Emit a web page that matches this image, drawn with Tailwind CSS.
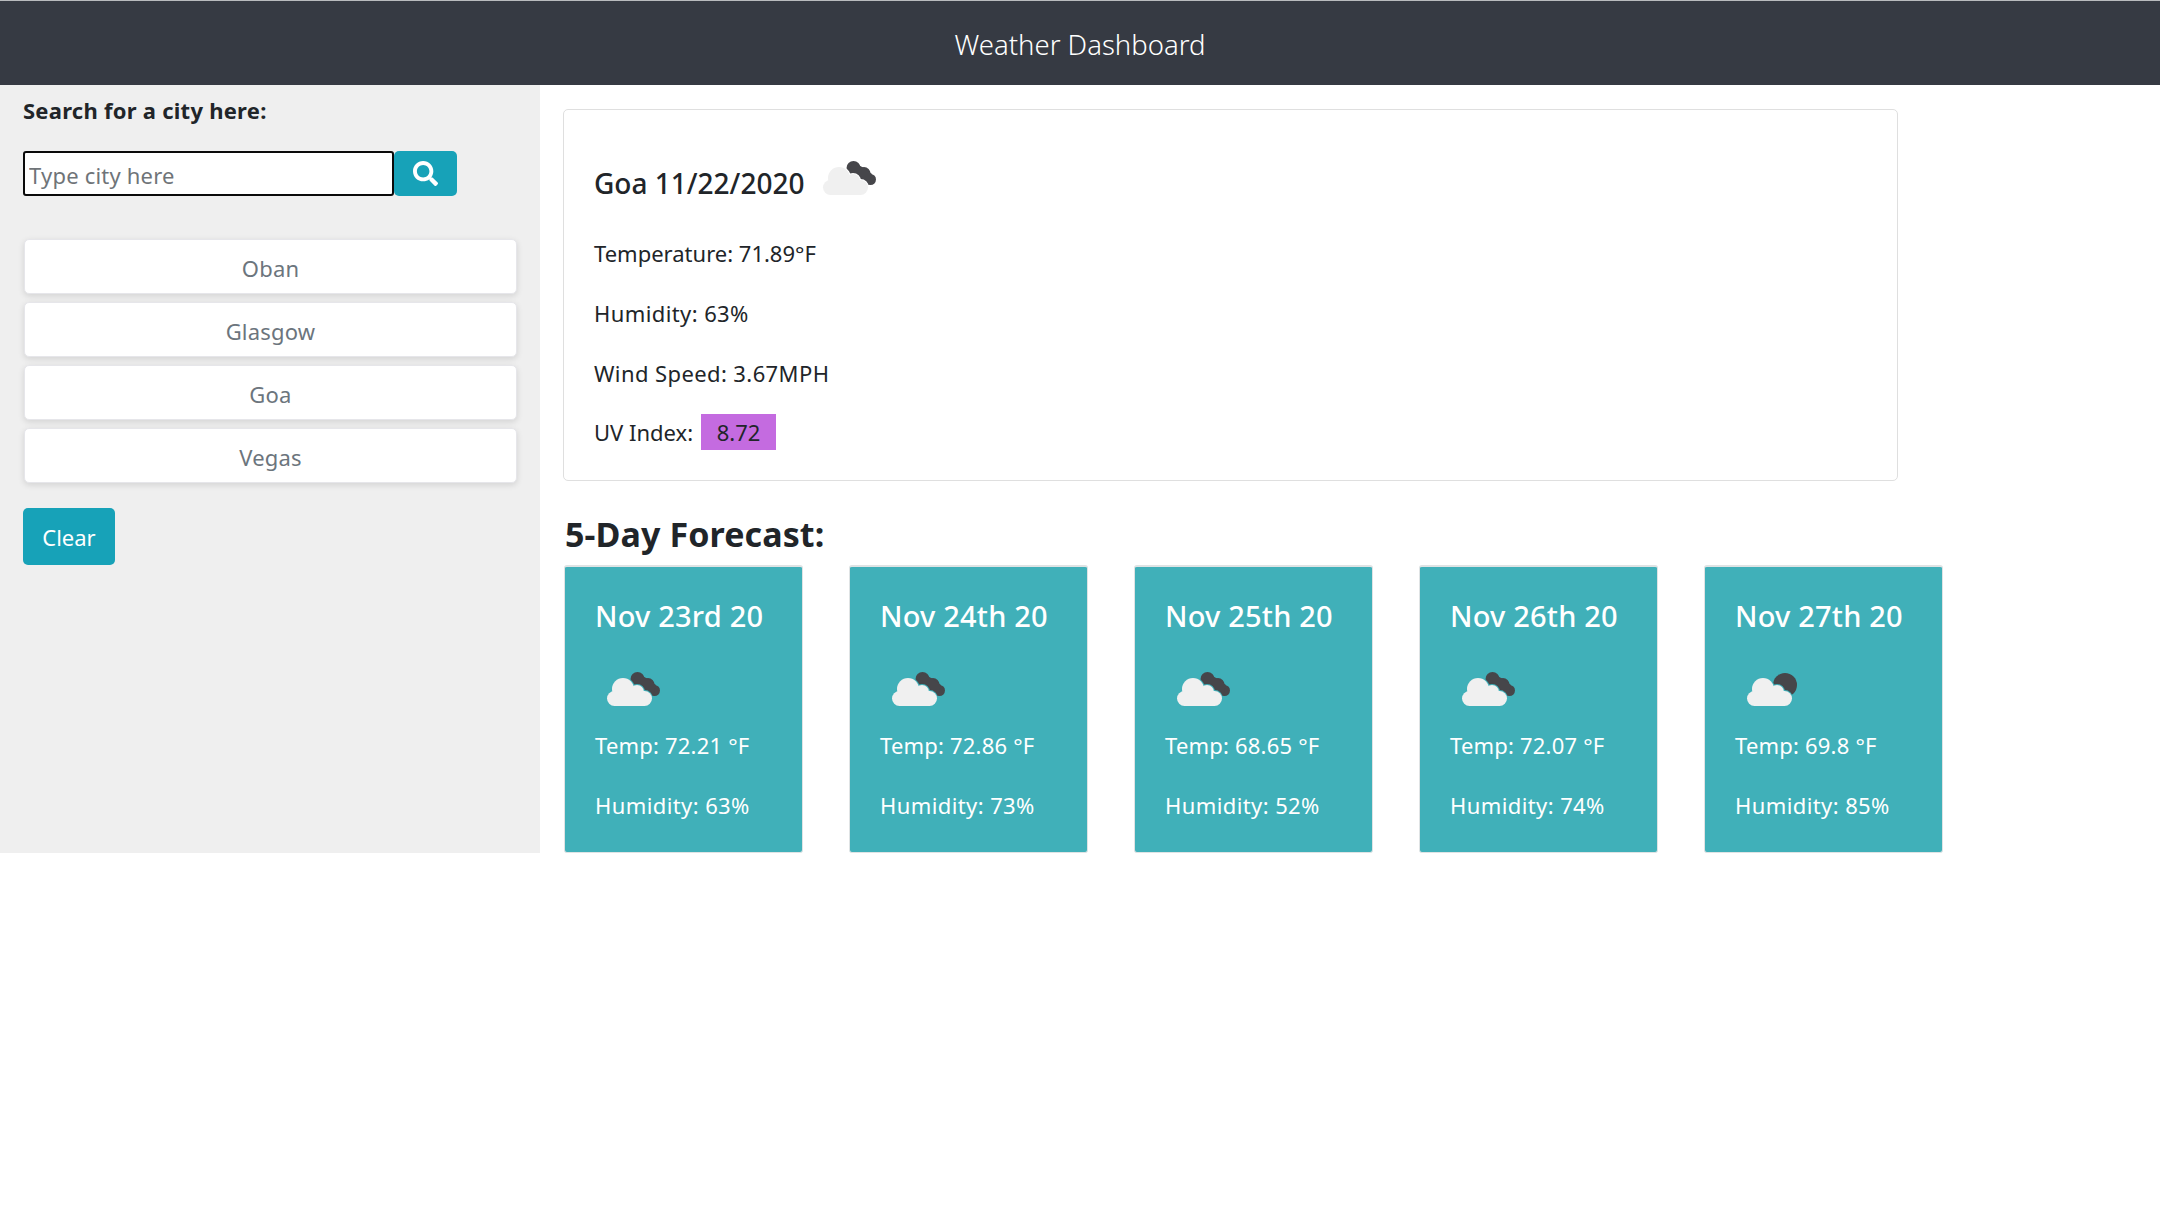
<!DOCTYPE html>
<html lang="en">
<head>
    <meta charset="UTF-8">
    <meta name="viewport" content="width=device-width, initial-scale=1.0">
    <title>Weather Dashboard</title>
    <script src="https://cdn.jsdelivr.net/npm/@tailwindcss/browser@4"></script>
</head>
<body class="bg-white font-['Noto_Sans',sans-serif] text-[#212529] h-[1219px] overflow-hidden">
    <svg class="hidden">
        <symbol id="cloudBack" viewBox="0 0 56 36">
            <g fill="#46464a">
                <circle cx="31.5" cy="7" r="7"/>
                <circle cx="42" cy="12.500" r="6.500"/>
                <circle cx="48.5" cy="18.5" r="5.500"/>
                <path d="M26 11 L31 1 L42 7 L50 13 L47 24 L30 18 Z"/>
            </g>
        </symbol>
        <symbol id="sunBack" viewBox="0 0 56 36">
            <circle cx="39" cy="13" r="12" fill="#46464a"/>
        </symbol>
        <symbol id="cloudFront" viewBox="0 0 56 36">
            <g fill="currentColor" stroke="currentColor" stroke-width="2">
                <circle cx="17" cy="17" r="11"/>
                <circle cx="31" cy="20" r="7"/>
                <rect x="1" y="19" width="45" height="15" rx="7.5"/>
            </g>
            <g fill="#f0f0f0">
                <circle cx="17" cy="17" r="11"/>
                <circle cx="31" cy="20" r="7"/>
                <rect x="1" y="19" width="45" height="15" rx="7.5"/>
            </g>
        </symbol>
    </svg>

    <header class="h-[85px] bg-[#363a43] border-t border-[#b9bbbe] flex items-center justify-center pt-[3px]">
        <h1 class="text-white text-[27.500px] font-light">Weather Dashboard</h1>
    </header>

    <div class="flex">
        <aside class="w-[540px] h-[768px] bg-[#efefef] pl-[23px] pr-[23px]">
            <p class="h-[50px] flex items-center font-bold text-[22px] tracking-[0.25px]">Search for a city here:</p>
            <div class="flex mt-[16px]">
                <input type="text" placeholder="Type city here" class="w-[371px] h-[45px] bg-white border-[2px] border-[#0a0a0a] rounded-[3px] px-[4px] pt-[3px] text-[22px] tracking-[0.2px] placeholder:text-[#6f7478] outline-none">
                <button class="w-[63px] h-[45px] bg-[#17a2b8] rounded-[5px] flex items-center justify-center">
                    <svg viewBox="0 0 512 512" class="w-[25px] h-[25px]" fill="#fff"><path d="M505 442.7L405.3 343c-4.500-4.500-10.600-7-17-7H372c27.600-35.300 44-79.700 44-128C416 93.100 322.900 0 208 0S0 93.100 0 208s93.100 208 208 208c48.300 0 92.700-16.400 128-44v16.300c0 6.400 2.500 12.500 7 17l99.700 99.700c9.400 9.400 24.600 9.400 33.900 0l28.300-28.300c9.400-9.400 9.400-24.600.1-34zM208 336c-70.700 0-128-57.200-128-128 0-70.700 57.200-128 128-128 70.700 0 128 57.200 128 128 0 70.700-57.200 128-128 128z"/></svg>
                </button>
            </div>
            <ul class="mt-[43px] ml-px w-[493px] flex flex-col gap-[8px] text-[22px] tracking-[0.2px] text-[#6c757d]">
                <li class="h-[55px] bg-white rounded-[5px] border border-[#e6e6ea] shadow-[0_2px_6px_rgba(0,0,0,0.12)] flex items-center justify-center pt-[3px]">Oban</li>
                <li class="h-[55px] bg-white rounded-[5px] border border-[#e6e6ea] shadow-[0_2px_6px_rgba(0,0,0,0.12)] flex items-center justify-center pt-[3px]">Glasgow</li>
                <li class="h-[55px] bg-white rounded-[5px] border border-[#e6e6ea] shadow-[0_2px_6px_rgba(0,0,0,0.12)] flex items-center justify-center pt-[3px]">Goa</li>
                <li class="h-[55px] bg-white rounded-[5px] border border-[#e6e6ea] shadow-[0_2px_6px_rgba(0,0,0,0.12)] flex items-center justify-center pt-[3px]">Vegas</li>
            </ul>
            <button class="mt-[25px] w-[92px] h-[57px] bg-[#17a2b8] rounded-[5px] text-white text-[22px] pt-[2px]">Clear</button>
        </aside>

        <main class="flex-1 pl-[23px]">
            <section class="mt-[24px] w-[1335px] h-[372px] border border-[#dfdfdf] rounded-[5px] pl-[30px] pt-[50px]">
                <div class="flex items-center h-[46px]">
                    <h2 class="text-[28px] font-medium">Goa 11/22/2020</h2>
                    <div class="relative w-[56px] h-[36px] ml-[18px] mb-[8px] blur-[0.4px] text-white">
                        <svg class="absolute inset-0 w-full h-full"><use href="#cloudBack"/></svg>
                        <svg class="absolute inset-0 w-full h-full"><use href="#cloudFront"/></svg>
                    </div>
                </div>
                <div class="mt-[32px] flex flex-col gap-[29.800px] text-[22px] leading-[30px]">
                    <p>Temperature: 71.89°F</p>
                    <p class="tracking-[0.4px]">Humidity: 63%</p>
                    <p class="tracking-[0.4px]">Wind Speed: 3.67MPH</p>
                    <p class="flex items-center h-[30px]">UV Index:<span class="ml-[8px] w-[75px] h-[36px] bg-[#c46be0] flex items-center justify-center">8.72</span></p>
                </div>
            </section>

            <h3 class="h-[60px] mt-[23px] mb-px ml-[2px] flex items-center text-[34px] font-bold tracking-[0.1px]">5-Day Forecast:</h3>

            <div class="flex gap-[46px] ml-px">
                <article class="w-[239px] h-[288px] bg-[#40b0b9] border border-t-2 border-[#dfe3e4] rounded-[3px] text-white pl-[30px]">
                    <h4 class="h-[48px] mt-[25px] flex items-center text-[29px] font-medium tracking-[0.2px]">Nov 23rd 20</h4>
                    <div class="relative w-[56px] h-[36px] mt-[32px] ml-[11px] blur-[0.4px] text-[#40b0b9]">
                        <svg class="absolute inset-0 w-full h-full"><use href="#cloudBack"/></svg>
                        <svg class="absolute inset-0 w-full h-full"><use href="#cloudFront"/></svg>
                    </div>
                    <p class="mt-[22px] text-[22px] leading-[30px] tracking-[0.2px]">Temp: 72.21 °F</p>
                    <p class="mt-[30px] text-[22px] leading-[30px] tracking-[0.4px]">Humidity: 63%</p>
                </article>
                <article class="w-[239px] h-[288px] bg-[#40b0b9] border border-t-2 border-[#dfe3e4] rounded-[3px] text-white pl-[30px]">
                    <h4 class="h-[48px] mt-[25px] flex items-center text-[29px] font-medium tracking-[0.2px]">Nov 24th 20</h4>
                    <div class="relative w-[56px] h-[36px] mt-[32px] ml-[11px] blur-[0.4px] text-[#40b0b9]">
                        <svg class="absolute inset-0 w-full h-full"><use href="#cloudBack"/></svg>
                        <svg class="absolute inset-0 w-full h-full"><use href="#cloudFront"/></svg>
                    </div>
                    <p class="mt-[22px] text-[22px] leading-[30px] tracking-[0.2px]">Temp: 72.86 °F</p>
                    <p class="mt-[30px] text-[22px] leading-[30px] tracking-[0.4px]">Humidity: 73%</p>
                </article>
                <article class="w-[239px] h-[288px] bg-[#40b0b9] border border-t-2 border-[#dfe3e4] rounded-[3px] text-white pl-[30px]">
                    <h4 class="h-[48px] mt-[25px] flex items-center text-[29px] font-medium tracking-[0.2px]">Nov 25th 20</h4>
                    <div class="relative w-[56px] h-[36px] mt-[32px] ml-[11px] blur-[0.4px] text-[#40b0b9]">
                        <svg class="absolute inset-0 w-full h-full"><use href="#cloudBack"/></svg>
                        <svg class="absolute inset-0 w-full h-full"><use href="#cloudFront"/></svg>
                    </div>
                    <p class="mt-[22px] text-[22px] leading-[30px] tracking-[0.2px]">Temp: 68.65 °F</p>
                    <p class="mt-[30px] text-[22px] leading-[30px] tracking-[0.4px]">Humidity: 52%</p>
                </article>
                <article class="w-[239px] h-[288px] bg-[#40b0b9] border border-t-2 border-[#dfe3e4] rounded-[3px] text-white pl-[30px]">
                    <h4 class="h-[48px] mt-[25px] flex items-center text-[29px] font-medium tracking-[0.2px]">Nov 26th 20</h4>
                    <div class="relative w-[56px] h-[36px] mt-[32px] ml-[11px] blur-[0.4px] text-[#40b0b9]">
                        <svg class="absolute inset-0 w-full h-full"><use href="#cloudBack"/></svg>
                        <svg class="absolute inset-0 w-full h-full"><use href="#cloudFront"/></svg>
                    </div>
                    <p class="mt-[22px] text-[22px] leading-[30px] tracking-[0.2px]">Temp: 72.07 °F</p>
                    <p class="mt-[30px] text-[22px] leading-[30px] tracking-[0.4px]">Humidity: 74%</p>
                </article>
                <article class="w-[239px] h-[288px] bg-[#40b0b9] border border-t-2 border-[#dfe3e4] rounded-[3px] text-white pl-[30px]">
                    <h4 class="h-[48px] mt-[25px] flex items-center text-[29px] font-medium tracking-[0.2px]">Nov 27th 20</h4>
                    <div class="relative w-[56px] h-[36px] mt-[32px] ml-[11px] blur-[0.4px] text-[#40b0b9]">
                        <svg class="absolute inset-0 w-full h-full"><use href="#sunBack"/></svg>
                        <svg class="absolute inset-0 w-full h-full"><use href="#cloudFront"/></svg>
                    </div>
                    <p class="mt-[22px] text-[22px] leading-[30px] tracking-[0.2px]">Temp: 69.8 °F</p>
                    <p class="mt-[30px] text-[22px] leading-[30px] tracking-[0.4px]">Humidity: 85%</p>
                </article>
            </div>
        </main>
    </div>
</body>
</html>
